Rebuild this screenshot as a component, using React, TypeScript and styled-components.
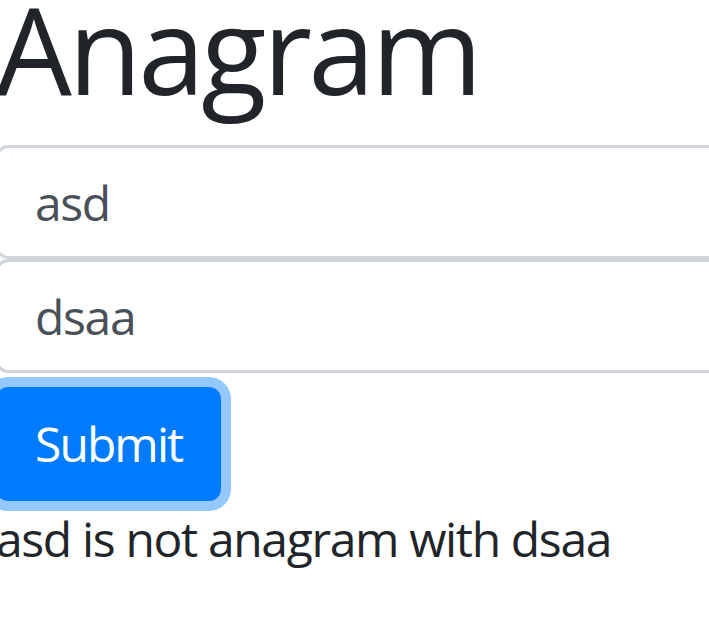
import { useState, FormEvent } from "react";
import styled, { createGlobalStyle } from "styled-components";

const GlobalStyle = createGlobalStyle`
  body {
    margin: 0;
    overflow: hidden;
    background: #fff;
    font-family: "Open Sans", "Noto Sans", sans-serif;
    color: #212529;
  }
`;

const isAnagram = (a: string, b: string) =>
  a.split("").sort().join("") === b.split("").sort().join("");

const App = () => {
  const [first, setFirst] = useState("asd");
  const [second, setSecond] = useState("dsaa");
  const [result, setResult] = useState("asd is not anagram with dsaa");

  const handleSubmit = (e: FormEvent) => {
    e.preventDefault();
    const verdict = isAnagram(first, second) ? "is anagram" : "is not anagram";
    setResult(`${first} ${verdict} with ${second}`);
  };

  return (
    <>
      <GlobalStyle />
      <PageStyled>
        <h1>Anagram</h1>
        <form onSubmit={handleSubmit}>
          <Input value={first} onChange={(e) => setFirst(e.target.value)} />
          <Input value={second} onChange={(e) => setSecond(e.target.value)} />
          <SubmitButton type="submit">Submit</SubmitButton>
        </form>
        <Result>{result}</Result>
      </PageStyled>
    </>
  );
};

export default App;

const PageStyled = styled.div`
  width: 780px;
  margin: -23px 0 0 -4px;

  h1 {
    margin: 0 0 24px;
    font-size: 120px;
    font-weight: 400;
    letter-spacing: -0.03em;
    line-height: 1.2;
    color: #212529;
  }

  form {
    margin: 0;
  }
`;

const Input = styled.input`
  display: block;
  width: 100%;
  height: 114px;
  box-sizing: border-box;
  padding: 18px 36px;
  font-family: inherit;
  font-size: 48px;
  letter-spacing: -0.028em;
  line-height: 1.5;
  color: #495057;
  background: #fff;
  border: 3px solid #ced4da;
  border-radius: 12px;
  outline: none;
`;

const SubmitButton = styled.button`
  display: inline-block;
  margin-top: 14px;
  padding: 18px 36px;
  font-family: inherit;
  font-size: 48px;
  letter-spacing: -0.04em;
  line-height: 1.5;
  color: #fff;
  background: #007bff;
  border: 3px solid #007bff;
  border-radius: 12px;
  box-shadow: 0 0 0 10px rgba(38, 143, 255, 0.5);
  cursor: pointer;
`;

const Result = styled.div`
  margin-top: 2px;
  font-size: 48px;
  letter-spacing: -0.028em;
  line-height: 1.5;
  color: #212529;
`;
